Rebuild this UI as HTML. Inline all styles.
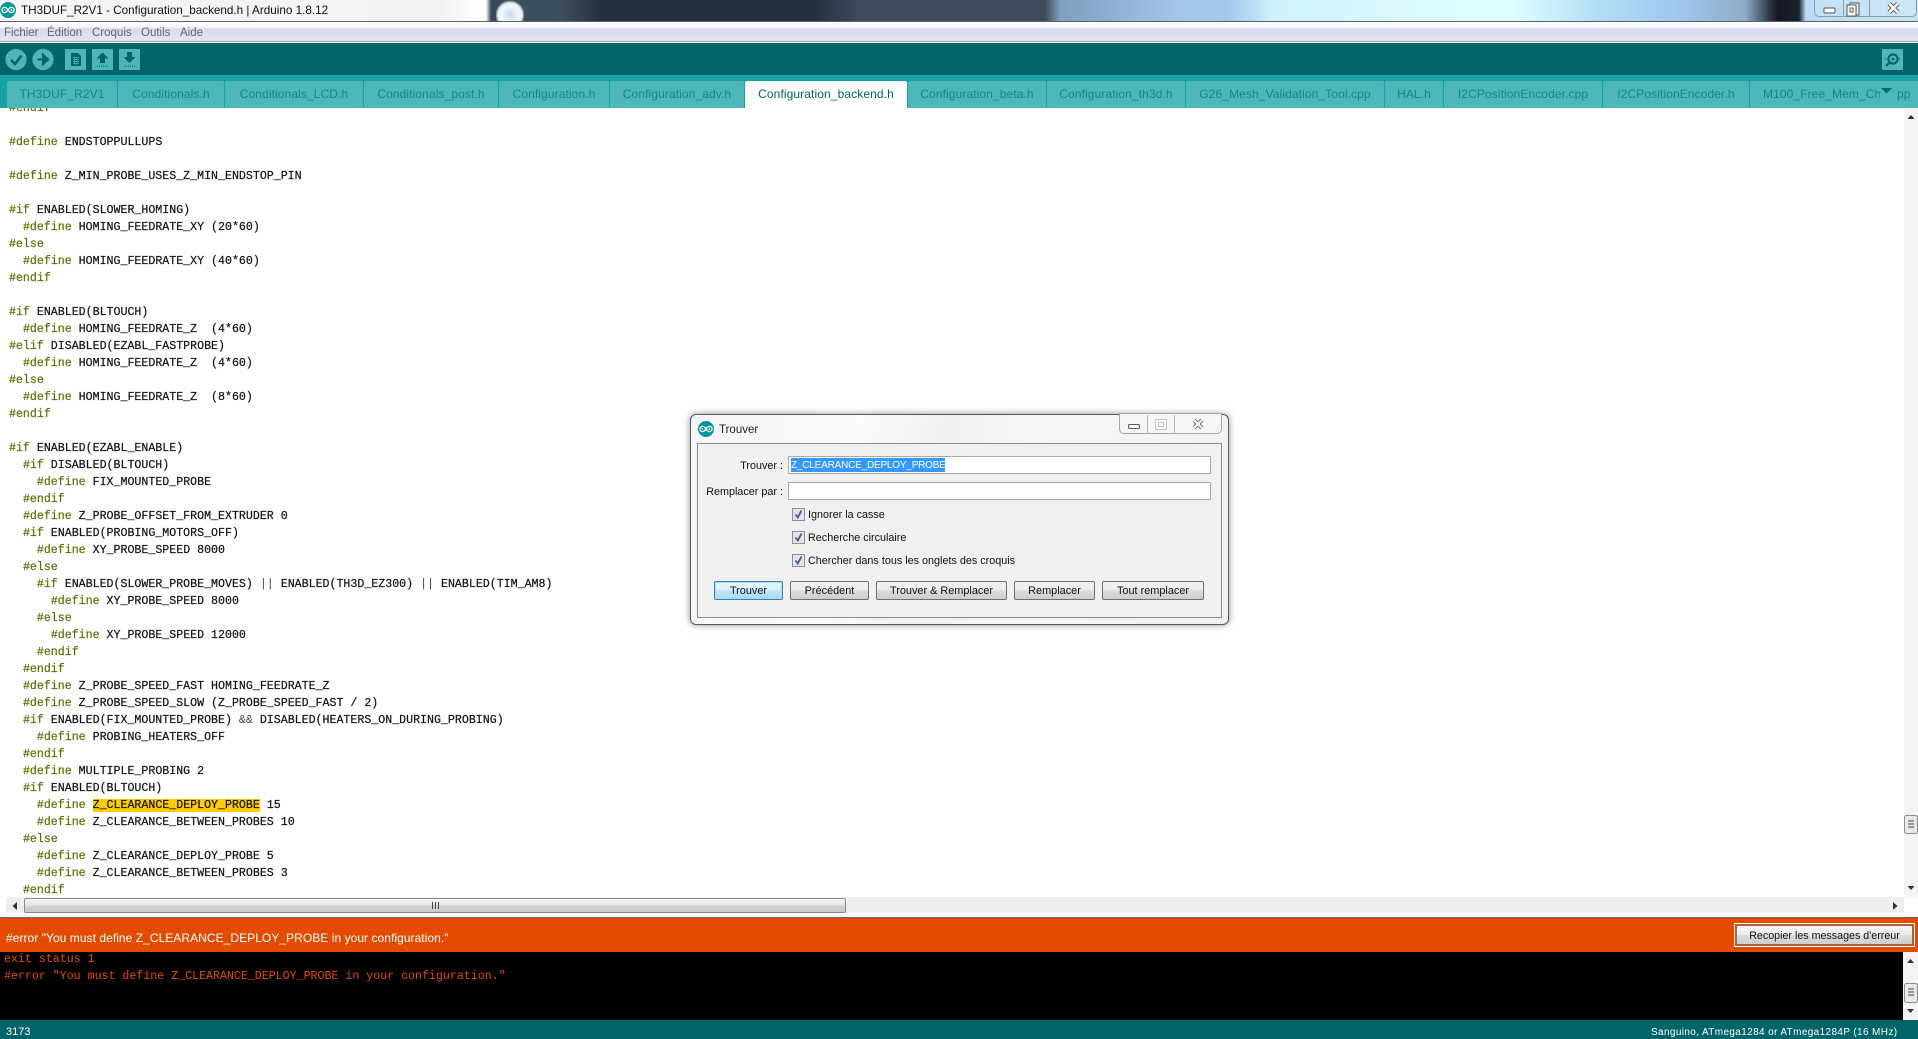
<!DOCTYPE html>
<html lang="fr"><head><meta charset="utf-8"><title>TH3DUF_R2V1 - Configuration_backend.h | Arduino 1.8.12</title>
<style>
html,body{margin:0;padding:0;width:1918px;height:1039px;overflow:hidden;background:#fff;font-family:"Liberation Sans",sans-serif}
#w{position:absolute;left:0;top:0;width:1918px;height:1039px;overflow:hidden;filter:blur(.35px)}
.a{position:absolute;white-space:pre}
#title{left:0;top:0;width:1918px;height:21px;background:linear-gradient(90deg,#f4f5f6 0,#f2f3f4 300px,#f1f3f3 440px,#fff 482px,#fff 486px,#3a4b5a 491px,#3d4f5c 560px,#26313f 600px,#26313f 815px,#3f4b5b 860px,#3f4b5b 1045px,#7f9fc0 1060px,#a4c6ea 1180px,#a2c8ec 1227px,#cff2fa 1274px,#d8fbff 1415px,#e0ffff 1509px,#b0dcf5 1603px,#a0c8f0 1674px,#8fadc8 1745px,#334050 1768px,#15171f 1778px,#1a2230 1799px,#bcdcf5 1806px,#c5e3f5 1918px)}
#bar{left:0;top:21px;width:1918px;height:1px;background:#5c6062}
#menu{left:0;top:22px;width:1918px;height:19px;background:linear-gradient(#fff 0,#f6f7fb 5px,#d7dbee 7px,#e4e6f3 19px)}
#ml{left:0;top:41px;width:1918px;height:1px;background:#a3a5a8}
#tb{left:0;top:43px;width:1918px;height:32px;background:#006468}
#st{left:0;top:75px;width:1918px;height:33px;background:#17A1A5}
.tab{position:absolute;top:81px;height:27px;line-height:26px;background:#4DB6B9;color:#1c8487;font-size:12px;letter-spacing:.1px;text-align:center;border-radius:2px 2px 0 0;overflow:hidden;white-space:pre}
#code{position:absolute;left:9px;top:108px;width:1890px;height:788px;overflow:hidden}
#code pre{position:absolute;left:0;top:-8px;margin:0;font:11.62px/17px "Liberation Mono",monospace;color:#111;white-space:pre;-webkit-text-stroke:.2px #111}
.k{color:#5E6D03;-webkit-text-stroke:.2px #5E6D03}
.hl{background:#FFCC00}
.g{color:#444;-webkit-text-stroke:0}
#err{left:0;top:918px;width:1918px;height:34px;background:#E34C00}
#con{left:0;top:952px;width:1903px;height:68px;background:#000}
#con pre{position:absolute;left:4px;top:-1.5px;margin:0;font:11.62px/17px "Liberation Mono",monospace;color:#E34C00}
#sb{left:0;top:1020px;width:1918px;height:19px;background:#006468;color:#fff}
.dlgb{position:absolute;top:581px;height:19px;line-height:18px;font-size:10.9px;text-align:center;color:#111;border:1px solid #707070;border-radius:2px;box-sizing:border-box;background:linear-gradient(#f3f3f3 0,#ececec 48%,#dcdcdc 52%,#cdcdcd 100%)}
.lab{position:absolute;font-size:10.8px;color:#111;white-space:pre}
.inp{position:absolute;left:788px;width:423px;height:18px;background:#fff;border:1px solid #a9a9a9;box-sizing:border-box}
</style></head><body><div id="w">

<div class="a" id="title"></div>
<div class="a" style="left:496px;top:0;width:28px;height:21px;background:radial-gradient(circle at 14px 15px,#c8dcf0 0,#f2f7fb 9px,#e8f0f6 12px,rgba(232,240,246,0) 15px)"></div>
<div class="a" id="bar"></div>
<svg class="a" style="left:0;top:2px" width="16" height="16" viewBox="0 0 16 16"><circle cx="8" cy="8" r="8" fill="#00979C"/><path d="M8 8C6.8 6 5.8 5.4 4.5 5.4A2.6 2.6 0 0 0 4.5 10.6C5.8 10.6 6.8 10 8 8C9.2 6 10.2 5.4 11.5 5.4A2.6 2.6 0 0 1 11.5 10.6C10.2 10.6 9.2 10 8 8Z" fill="none" stroke="#fff" stroke-width="1.3"/><path d="M3.4 8H5.4M10.5 8H12.5M11.5 7V9" stroke="#fff" stroke-width=".8"/></svg>
<div class="a" style="left:21px;top:4px;font-size:11.7px;line-height:14px;color:#111">TH3DUF_R2V1 - Configuration_backend.h | Arduino 1.8.12</div>
<div class="a" style="left:1814px;top:-2px;width:103px;height:19px;border:1px solid #8d9aa8;border-radius:0 0 5px 5px;box-sizing:border-box;background:rgba(255,255,255,.12)"></div>
<div class="a" style="left:1843px;top:0;width:1px;height:16px;background:#8d9aa8"></div>
<div class="a" style="left:1869px;top:0;width:1px;height:16px;background:#8d9aa8"></div>
<svg class="a" style="left:1814px;top:0" width="104" height="17" viewBox="0 0 104 17"><rect x="10" y="8" width="11" height="5" rx="1" fill="#fff" stroke="#555"/><rect x="36" y="3" width="9" height="12" fill="#e8eef4" stroke="#555"/><rect x="33" y="5" width="9" height="11" fill="#fff" stroke="#555"/><rect x="36" y="8" width="3" height="4" fill="none" stroke="#555"/><path d="M75 3.5L84 12.5M84 3.5L75 12.5" stroke="#5a5f66" stroke-width="4.4"/><path d="M75 3.5L84 12.5M84 3.5L75 12.5" stroke="#fff" stroke-width="2.4"/></svg>

<div class="a" id="menu"></div>
<div class="a" id="ml"></div>
<div class="a" style="left:0;top:42px;width:1918px;height:1px;background:#fff"></div>
<div class="a" style="left:4px;top:26px;font-size:11.5px;line-height:14px;color:#666">Fichier</div>
<div class="a" style="left:47px;top:26px;font-size:11.5px;line-height:14px;color:#666">Édition</div>
<div class="a" style="left:92px;top:26px;font-size:11.5px;line-height:14px;color:#666">Croquis</div>
<div class="a" style="left:141px;top:26px;font-size:11.5px;line-height:14px;color:#666">Outils</div>
<div class="a" style="left:180px;top:26px;font-size:11.5px;line-height:14px;color:#666">Aide</div>

<div class="a" id="tb"></div>
<svg class="a" style="left:0;top:43px" width="150" height="32" viewBox="0 43 150 32">
<circle cx="16" cy="59.5" r="10.5" fill="#4DB6B9" stroke="#3aa6aa" stroke-width=".5"/>
<path d="M11 60L15 64L21.5 55.5" fill="none" stroke="#006468" stroke-width="2.6"/>
<circle cx="43" cy="59.5" r="10.5" fill="#4DB6B9" stroke="#3aa6aa" stroke-width=".5"/>
<path d="M37.5 59.5H46M43 54.8L48.2 59.5L43 64.2Z" fill="#006468" stroke="#006468" stroke-width="2"/>
<rect x="65" y="49" width="21" height="21" fill="#4DB6B9"/>
<path d="M71 53H78L81 56V66H71Z" fill="#006468"/><path d="M73 57.5H79M73 59.5H79M73 61.5H79M73 63.5H79M74.5 57V65M77 57V65" stroke="#4DB6B9" stroke-width=".7"/>
<rect x="92" y="49" width="21" height="21" fill="#4DB6B9"/>
<path d="M102.5 52.5L108.5 58.5H105V63H100V58.5H96.5Z" fill="#006468"/><path d="M97 66.2H108" stroke="#006468" stroke-width="1" stroke-dasharray="1 1"/>
<rect x="119" y="49" width="21" height="21" fill="#4DB6B9"/>
<path d="M129.5 63L123.5 57H127V52H132V57H135.5Z" fill="#006468"/><path d="M124 66.2H135" stroke="#006468" stroke-width="1" stroke-dasharray="1 1"/>
</svg>
<svg class="a" style="left:1882px;top:49px" width="21" height="21" viewBox="0 0 21 21"><rect width="21" height="21" fill="#4DB6B9"/><circle cx="11" cy="10" r="4.6" fill="none" stroke="#006468" stroke-width="2"/><circle cx="11" cy="10" r="1.4" fill="#006468"/><path d="M7.5 13.5L4 17" stroke="#006468" stroke-width="2.2"/><path d="M2.5 10H5M17 10H19" stroke="#006468" stroke-width="1" stroke-dasharray="1 1"/></svg>

<div class="a" id="st"></div>
<div class="tab" style="left:7px;width:110px">TH3DUF_R2V1</div>
<div class="tab" style="left:118px;width:106px">Conditionals.h</div>
<div class="tab" style="left:225px;width:138px">Conditionals_LCD.h</div>
<div class="tab" style="left:364px;width:134px">Conditionals_post.h</div>
<div class="tab" style="left:499px;width:110px">Configuration.h</div>
<div class="tab" style="left:610px;width:134px">Configuration_adv.h</div>
<div class="tab" style="left:745px;width:162px;background:#fff;color:#006468">Configuration_backend.h</div>
<div class="tab" style="left:908px;width:138px">Configuration_beta.h</div>
<div class="tab" style="left:1047px;width:138px">Configuration_th3d.h</div>
<div class="tab" style="left:1186px;width:198px">G26_Mesh_Validation_Tool.cpp</div>
<div class="tab" style="left:1385px;width:58px">HAL.h</div>
<div class="tab" style="left:1444px;width:158px">I2CPositionEncoder.cpp</div>
<div class="tab" style="left:1603px;width:146px">I2CPositionEncoder.h</div>
<div class="tab" style="left:1750px;width:168px;text-align:left;border-radius:2px 0 0 0"><span style="position:absolute;left:13px;width:117px;overflow:hidden;display:block">M100_Free_Mem_Chk</span><span style="position:absolute;left:147px">pp</span></div>
<svg class="a" style="left:1881px;top:88px" width="12" height="6"><path d="M0 0H11L5.5 5.5Z" fill="#006468"/></svg>

<div id="code"><pre><span class="k">#endif</span>

<span class="k">#define</span> ENDSTOPPULLUPS

<span class="k">#define</span> Z_MIN_PROBE_USES_Z_MIN_ENDSTOP_PIN

<span class="k">#if</span> ENABLED(SLOWER_HOMING)
  <span class="k">#define</span> HOMING_FEEDRATE_XY (20*60)
<span class="k">#else</span>
  <span class="k">#define</span> HOMING_FEEDRATE_XY (40*60)
<span class="k">#endif</span>

<span class="k">#if</span> ENABLED(BLTOUCH)
  <span class="k">#define</span> HOMING_FEEDRATE_Z  (4*60)
<span class="k">#elif</span> DISABLED(EZABL_FASTPROBE)
  <span class="k">#define</span> HOMING_FEEDRATE_Z  (4*60)
<span class="k">#else</span>
  <span class="k">#define</span> HOMING_FEEDRATE_Z  (8*60)
<span class="k">#endif</span>

<span class="k">#if</span> ENABLED(EZABL_ENABLE)
  <span class="k">#if</span> DISABLED(BLTOUCH)
    <span class="k">#define</span> FIX_MOUNTED_PROBE
  <span class="k">#endif</span>
  <span class="k">#define</span> Z_PROBE_OFFSET_FROM_EXTRUDER 0
  <span class="k">#if</span> ENABLED(PROBING_MOTORS_OFF)
    <span class="k">#define</span> XY_PROBE_SPEED 8000
  <span class="k">#else</span>
    <span class="k">#if</span> ENABLED(SLOWER_PROBE_MOVES) <span class="g">||</span> ENABLED(TH3D_EZ300) <span class="g">||</span> ENABLED(TIM_AM8)
      <span class="k">#define</span> XY_PROBE_SPEED 8000
    <span class="k">#else</span>
      <span class="k">#define</span> XY_PROBE_SPEED 12000
    <span class="k">#endif</span>
  <span class="k">#endif</span>
  <span class="k">#define</span> Z_PROBE_SPEED_FAST HOMING_FEEDRATE_Z
  <span class="k">#define</span> Z_PROBE_SPEED_SLOW (Z_PROBE_SPEED_FAST / 2)
  <span class="k">#if</span> ENABLED(FIX_MOUNTED_PROBE) <span class="g">&amp;&amp;</span> DISABLED(HEATERS_ON_DURING_PROBING)
    <span class="k">#define</span> PROBING_HEATERS_OFF
  <span class="k">#endif</span>
  <span class="k">#define</span> MULTIPLE_PROBING 2
  <span class="k">#if</span> ENABLED(BLTOUCH)
    <span class="k">#define</span> <span class="hl">Z_CLEARANCE_DEPLOY_PROBE</span> 15
    <span class="k">#define</span> Z_CLEARANCE_BETWEEN_PROBES 10
  <span class="k">#else</span>
    <span class="k">#define</span> Z_CLEARANCE_DEPLOY_PROBE 5
    <span class="k">#define</span> Z_CLEARANCE_BETWEEN_PROBES 3
  <span class="k">#endif</span></pre></div>

<!-- main vertical scrollbar -->
<div class="a" style="left:1904px;top:108px;width:14px;height:790px;background:#f4f4f4"></div>
<svg class="a" style="left:1904px;top:108px" width="14" height="790" viewBox="0 108 14 790"><path d="M3.5 119L7 115L10.5 119Z" fill="#333"/><path d="M3.5 886L7 890L10.5 886Z" fill="#333"/><rect x="0.5" y="815.5" width="13" height="18" rx="2" fill="#e8e8e8" stroke="#8d8d8d"/><path d="M4 821H10M4 824H10M4 827H10" stroke="#444"/></svg>

<!-- horizontal scrollbar -->
<div class="a" style="left:0;top:897px;width:1918px;height:16px;background:#eee"></div>
<div class="a" style="left:0;top:913px;width:1918px;height:5px;background:#fff"></div>
<div class="a" style="left:0;top:896px;width:6px;height:18px;background:#fff"></div>
<div class="a" style="left:1904px;top:897px;width:14px;height:21px;background:#fff"></div>
<div class="a" style="left:24px;top:898px;width:822px;height:15px;border:1px solid #8a8a8a;border-radius:2px;box-sizing:border-box;background:linear-gradient(#f4f4f4,#e6e6e6 45%,#d2d2d2 55%,#cacaca)"></div>
<svg class="a" style="left:9px;top:900px" width="12" height="12"><path d="M8 2V10L3.5 6Z" fill="#333"/></svg>
<svg class="a" style="left:1889px;top:900px" width="12" height="12"><path d="M4 2V10L8.5 6Z" fill="#333"/></svg>
<svg class="a" style="left:431px;top:901px" width="9" height="9"><path d="M1.5 1V8M4.5 1V8M7.5 1V8" stroke="#444"/></svg>

<div class="a" style="left:0;top:917px;width:1918px;height:1px;background:#666"></div>
<div class="a" id="err"></div>
<div class="a" style="left:6px;top:931px;font-size:12px;line-height:14px;letter-spacing:.05px;color:#fff">#error "You must define Z_CLEARANCE_DEPLOY_PROBE in your configuration."</div>
<div class="a" style="left:1734px;top:923px;width:181px;height:24px;border:1px solid #fff;box-sizing:border-box;padding:1px;background:#E34C00"><div style="height:20px;line-height:20px;font-size:10.7px;text-align:center;color:#111;border:1px solid #777;border-radius:2px;box-sizing:border-box;background:linear-gradient(#f3f3f3,#ececec 48%,#dcdcdc 52%,#cfcfcf)">Recopier les messages d'erreur</div></div>

<div class="a" id="con"><pre>exit status 1
#error "You must define Z_CLEARANCE_DEPLOY_PROBE in your configuration."</pre></div>
<div class="a" style="left:1903px;top:952px;width:15px;height:68px;background:#f4f4f4"></div>
<svg class="a" style="left:1903px;top:952px" width="15" height="68" viewBox="0 952 15 68"><path d="M4 963L7.5 959L11 963Z" fill="#333"/><path d="M4 1009L7.5 1013L11 1009Z" fill="#333"/><rect x="1.5" y="983.5" width="13" height="19" rx="2" fill="#e8e8e8" stroke="#8d8d8d"/><path d="M5 989H11M5 992H11M5 995H11" stroke="#444"/></svg>

<div class="a" id="sb"></div>
<div class="a" style="left:6px;top:1025px;font-size:11px;line-height:14px;color:#fff">3173</div>
<div class="a" style="left:1651px;top:1025.5px;font-size:10px;line-height:14px;letter-spacing:.37px;color:#fff">Sanguino, ATmega1284 or ATmega1284P (16 MHz)</div>

<!-- dialog -->
<div class="a" style="left:690px;top:414px;width:539px;height:211px;box-sizing:border-box;border:1px solid #55595c;border-radius:6px;background:linear-gradient(100deg,#f6f6f6 0,#fbfbfb 30%,#f0f0f0 45%,#f7f7f7 60%,#f0f1f1 100%);box-shadow:0 0 7px rgba(0,0,0,.45)"></div>
<svg class="a" style="left:698px;top:421px" width="16" height="16" viewBox="0 0 16 16"><circle cx="8" cy="8" r="8" fill="#00979C"/><path d="M8 8C6.8 6 5.8 5.4 4.5 5.4A2.6 2.6 0 0 0 4.5 10.6C5.8 10.6 6.8 10 8 8C9.2 6 10.2 5.4 11.5 5.4A2.6 2.6 0 0 1 11.5 10.6C10.2 10.6 9.2 10 8 8Z" fill="none" stroke="#fff" stroke-width="1.3"/><path d="M3.4 8H5.4M10.5 8H12.5M11.5 7V9" stroke="#fff" stroke-width=".8"/></svg>
<div class="a" style="left:719px;top:422.5px;font-size:11.5px;line-height:14px;color:#222">Trouver</div>
<div class="a" style="left:1119px;top:413px;width:103px;height:21px;border:1px solid #a5a8ab;border-radius:0 0 5px 5px;box-sizing:border-box;background:#f6f6f6"></div>
<div class="a" style="left:1147px;top:415px;width:1px;height:18px;background:#b5b8bb"></div>
<div class="a" style="left:1174px;top:415px;width:1px;height:18px;background:#b5b8bb"></div>
<svg class="a" style="left:1119px;top:415px" width="103" height="19" viewBox="0 0 103 19"><rect x="9.5" y="9.5" width="11" height="4" rx="1" fill="#fff" stroke="#555"/><rect x="36.5" y="4.5" width="11" height="10" fill="none" stroke="#c8c8c8"/><rect x="39.5" y="7.5" width="5" height="4" fill="none" stroke="#c8c8c8"/><path d="M75 5L83 13M83 5L75 13" stroke="#6a6a6a" stroke-width="3.8"/><path d="M75 5L83 13M83 5L75 13" stroke="#fff" stroke-width="2"/></svg>

<div class="a" style="left:697px;top:443px;width:525px;height:175px;box-sizing:border-box;border:1px solid #8a8c8e;background:#f0f0f0"></div>
<div class="lab" style="right:1135px;top:459.5px">Trouver :</div>
<div class="lab" style="right:1135px;top:485.5px">Remplacer par :</div>
<div class="inp" style="top:456px"></div>
<div class="inp" style="top:482px"></div>
<div class="a" style="left:791px;top:458px;width:154px;height:14px;background:#3399FF"></div>
<div class="a" style="left:791px;top:459px;font-size:10px;line-height:14px;letter-spacing:-.2px;color:#fff">Z_CLEARANCE_DEPLOY_PROBE</div>

<svg class="a" style="left:792px;top:508px" width="14" height="13" viewBox="0 0 14 13"><rect x=".5" y=".5" width="12" height="12" fill="#e6e6e6" stroke="#8e8f8f"/><rect x="2.5" y="2.5" width="8" height="8" fill="#dfe3ea"/><path d="M3.5 6.5L5.8 9.5L9.5 2.5" fill="none" stroke="#46589a" stroke-width="1.8"/></svg>
<svg class="a" style="left:792px;top:531px" width="14" height="13" viewBox="0 0 14 13"><rect x=".5" y=".5" width="12" height="12" fill="#e6e6e6" stroke="#8e8f8f"/><rect x="2.5" y="2.5" width="8" height="8" fill="#dfe3ea"/><path d="M3.5 6.5L5.8 9.5L9.5 2.5" fill="none" stroke="#46589a" stroke-width="1.8"/></svg>
<svg class="a" style="left:792px;top:554px" width="14" height="13" viewBox="0 0 14 13"><rect x=".5" y=".5" width="12" height="12" fill="#e6e6e6" stroke="#8e8f8f"/><rect x="2.5" y="2.5" width="8" height="8" fill="#dfe3ea"/><path d="M3.5 6.5L5.8 9.5L9.5 2.5" fill="none" stroke="#46589a" stroke-width="1.8"/></svg>
<div class="lab" style="left:808px;top:508.5px">Ignorer la casse</div>
<div class="lab" style="left:808px;top:531.5px">Recherche circulaire</div>
<div class="lab" style="left:808px;top:554.5px">Chercher dans tous les onglets des croquis</div>

<div class="dlgb" style="left:714px;width:69px;border-color:#3c7fb1;box-shadow:inset 0 0 0 1px #a9dcf5;background:linear-gradient(#eaf6fd,#d9f0fc 48%,#bee6fd 52%,#a7d9f5)">Trouver</div>
<div class="dlgb" style="left:790px;width:79px">Précédent</div>
<div class="dlgb" style="left:876px;width:131px">Trouver &amp; Remplacer</div>
<div class="dlgb" style="left:1014px;width:81px">Remplacer</div>
<div class="dlgb" style="left:1102px;width:102px">Tout remplacer</div>

</div></body></html>
